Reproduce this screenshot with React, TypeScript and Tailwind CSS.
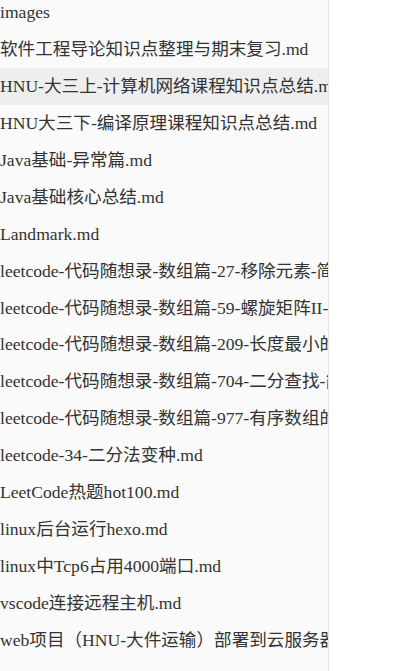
const files = [
  "images",
  "软件工程导论知识点整理与期末复习.md",
  "HNU-大三上-计算机网络课程知识点总结.md",
  "HNU大三下-编译原理课程知识点总结.md",
  "Java基础-异常篇.md",
  "Java基础核心总结.md",
  "Landmark.md",
  "leetcode-代码随想录-数组篇-27-移除元素-简单.md",
  "leetcode-代码随想录-数组篇-59-螺旋矩阵II-中等.md",
  "leetcode-代码随想录-数组篇-209-长度最小的子数组.md",
  "leetcode-代码随想录-数组篇-704-二分查找-简单.md",
  "leetcode-代码随想录-数组篇-977-有序数组的平方.md",
  "leetcode-34-二分法变种.md",
  "LeetCode热题hot100.md",
  "linux后台运行hexo.md",
  "linux中Tcp6占用4000端口.md",
  "vscode连接远程主机.md",
  "web项目（HNU-大件运输）部署到云服务器.md",
];

export default function App() {
  const active = 2;
  return (
    <div className="flex h-[671px] w-[403px] overflow-hidden bg-white">
      <div className="h-full w-[329px] shrink-0 overflow-hidden border-r border-[#e6e6e6] bg-[#fafafa]">
        <ul className="-mt-[5.8px]">
          {files.map((f, i) => (
            <li
              key={f}
              className={
                i === active
                  ? "flex h-[36.9px] items-center whitespace-nowrap bg-[#eeeeee] text-[17.6px] text-[#333333]"
                  : "flex h-[36.9px] items-center whitespace-nowrap text-[17.6px] text-[#333333]"
              }
              style={{ fontFamily: '"Liberation Serif", "Noto Sans CJK SC", serif' }}
            >
              {f}
            </li>
          ))}
        </ul>
      </div>
      <div className="flex-1" />
    </div>
  );
}
